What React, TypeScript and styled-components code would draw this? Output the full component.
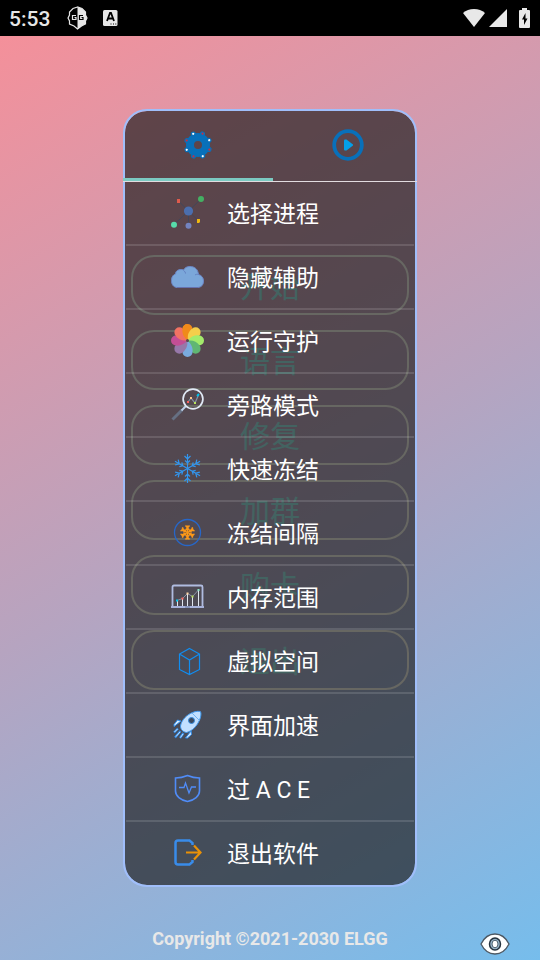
import React from "react";
import styled, { createGlobalStyle } from "styled-components";

const GlobalStyle = createGlobalStyle`
  * { box-sizing: border-box; }
  body { margin: 0; background: #000; }
  button { font: inherit; color: inherit; background: none; border: 0; padding: 0; cursor: pointer; }
  svg { display: block; flex: none; }
`;

const Screen = styled.div`
  display: flex;
  flex-direction: column;
  min-height: 100vh;
  font-family: Roboto, "Noto Sans CJK SC", sans-serif;
`;

const StatusBar = styled.header`
  display: flex;
  align-items: center;
  height: 36px;
  padding: 0 10px 0 9px;
  background: #000;
  color: #e6e6e6;
`;

const Clock = styled.time`
  font-size: 21px;
  font-weight: 500;
  line-height: 36px;
  margin-right: 17px;
  padding-top: 2px;
`;

const StatusGroup = styled.div<{ $gap: number; $end?: boolean }>`
  display: flex;
  align-items: center;
  gap: ${(p) => p.$gap}px;
  margin-left: ${(p) => (p.$end ? "auto" : "0")};
`;

const BatterySlot = styled.span`
  padding-left: 8px;
`;

const Stage = styled.main`
  position: relative;
  flex: 1;
  display: flex;
  flex-direction: column;
  align-items: center;
  padding: 219px 16px 9px;
  background: linear-gradient(150deg, #f4909a 0%, #b6a4c0 50%, #76bdec 100%);
`;

const Actions = styled.div`
  display: flex;
  flex-direction: column;
  gap: 15px;
  width: 100%;
  max-width: 278px;
  margin-bottom: 32px;
`;

const ActionButton = styled.button`
  && {
    height: 60px;
    border: 2px solid #fbfbec;
    border-radius: 23px;
    font-size: 30px;
    line-height: 56px;
    padding-top: 2px;
    color: #92f0ea;
  }
`;

const Copyright = styled.footer`
  margin-top: auto;
  font-size: 18px;
  font-weight: 700;
  line-height: 24px;
  color: #e8e8e8;
`;

const Overlay = styled.div`
  position: absolute;
  inset: 0;
  display: flex;
  align-items: center;
  justify-content: center;
`;

const Panel = styled.section`
  width: 100%;
  max-width: 294px;
  border: 2px solid #a0befa;
  border-radius: 24px;
  background: rgba(26, 26, 26, 0.66);
  background-clip: padding-box;
`;

const Tabs = styled.div`
  display: flex;
  overflow: hidden;
  margin: 0 -2px;
  border-bottom: 1px solid #e2dce0;
`;

const Tab = styled.button<{ $active?: boolean }>`
  && {
    display: flex;
    flex: 0 0 150px;
    align-items: center;
    justify-content: center;
    height: 70px;
    padding-top: 1px;
    border-bottom: 3px solid ${(p) => (p.$active ? "#7bcac2" : "transparent")};
  }
`;

const Menu = styled.ul`
  list-style: none;
  margin: 0;
  padding: 0 1px 1px;
`;

const MenuItem = styled.li`
  & + & {
    border-top: 2px solid rgba(255, 255, 255, 0.13);
  }
`;

const MenuButton = styled.button`
  && {
    display: flex;
    align-items: center;
    gap: 23px;
    width: 100%;
    height: 62px;
    padding: 0 0 2px 45px;
    font-size: 23px;
    line-height: 32px;
    color: #fff;
    text-align: left;
    white-space: pre;
  }
`;

const MenuLabel = styled.span`
  padding-top: 6px;
`;

const EyeButton = styled.button`
  position: absolute;
  right: 30px;
  bottom: 5px;
`;

const Icon = ({ children }: { children: React.ReactNode }) => (
  <svg width="33" height="33" viewBox="0 0 33 33" fill="none" aria-hidden="true">
    {children}
  </svg>
);

const NodesIcon = () => (
  <Icon>
    <path d="M17.5 15 7.5 5M17.5 15 30 3M17.5 15 3 28.5M17.5 15v15M17.5 15l10 10" stroke="#42465a" />
    <circle cx="17.5" cy="15" r="4.6" fill="#4b6eae" />
    <path d="M6 3h3v4H6z" fill="#de5b4c" />
    <circle cx="30" cy="3" r="3" fill="#44b063" />
    <circle cx="3" cy="28.7" r="3" fill="#57dcaa" />
    <circle cx="17.5" cy="29.8" r="3" fill="#7383bf" />
    <path d="M26 23h3v3l-1 1h-2z" fill="#efb810" />
  </Icon>
);

const CloudIcon = () => (
  <Icon>
    <path
      d="M6 27.5C2 27 .5 24 .5 20.500c0-4 2-6 4-6.500C4.500 11 7 9.500 10 9.500c1 0 2 0 2.500.5C14 7.500 16 6.500 19 6.500c5 0 8 3 8.500 8 3.500 1 5 3.500 5 6.500 0 4-2 6-5.500 6.500z"
      fill="#7ba7da"
      stroke="#6d86c5"
    />
    <path d="M12.500 10.500c1.500 1 2 2 2 3M24 15c1-.8 2-.8 3.500-.5" stroke="#627fc0" />
    <path d="M6 27.500h21.500" stroke="#6672ae" />
  </Icon>
);

const PETALS = ["#f08a1a", "#f4ce4b", "#a3eb6b", "#60b673", "#7aabdf", "#9778a9", "#c34e95", "#f17263"];

const FlowerIcon = () => (
  <Icon>
    {PETALS.map((color, i) => (
      <path
        key={color}
        d="M16.500 16C12.500 13.500 10.800 8.500 11.500 5a5 5 0 0 1 10 0c.7 4-1.500 8.500-5 11z"
        fill={color}
        transform={`rotate(${i * 45} 16.500 16.500)`}
      />
    ))}
    <path d="M16.500 16C12.500 13.500 10.800 8.500 11.500 5a5 5 0 0 1 5-5z" fill="#f08a1a" />
    <circle cx="16.500" cy="16.500" r="1.500" fill="#5c464c" />
  </Icon>
);

const MagnifierIcon = () => (
  <Icon>
    <path d="M1.500 31.500 11 22" stroke="#667083" strokeWidth="3" />
    <path d="m10.500 22.500 4.500-4.500" stroke="#bcd0ea" strokeWidth="2" />
    <circle cx="22" cy="11" r="9.900" stroke="#e1e9f6" strokeWidth="1.700" />
    <path d="m17 14 3-4 4 5 3.500-8" stroke="#8490a6" strokeWidth="1.200" />
    <path d="M16 13h2v2h-2z" fill="#fb605d" />
    <path d="M19 9h2v2h-2z" fill="#ffc58a" />
    <path d="M23 14h2v2h-2z" fill="#b6e45b" />
    <path d="m26 8 2-2" stroke="#00c3ee" strokeWidth="2" />
  </Icon>
);

const SnowflakeIcon = () => (
  <Icon>
    {[0, 60, 120, 180, 240, 300].map((a) => (
      <path
        key={a}
        d="M16.500 16.500V2m-3 2 3 3 3-3m-5.500 4.500 2.500 2.500 2.500-2.500"
        stroke="#3296ef"
        strokeWidth="1.200"
        transform={`rotate(${a} 16.500 16.500)`}
      />
    ))}
  </Icon>
);

const FreezeTimerIcon = () => (
  <Icon>
    <circle cx="16.500" cy="16.500" r="13" stroke="#2767c8" strokeWidth="1.300" />
    {[0, 60, 120, 180, 240, 300].map((a) => (
      <path
        key={a}
        d="M16.500 16.500v-7m-2 0 2 2.500 2-2.500m-3.500 3 1.500 2 1.500-2"
        stroke="#fb9818"
        strokeWidth="1.400"
        transform={`rotate(${a} 16.500 16.500)`}
      />
    ))}
  </Icon>
);

const ChartLaptopIcon = () => (
  <Icon>
    <path d="M1.500 26V7q0-1.500 1.500-1.500h27q1.500 0 1.500 1.500v19" stroke="#b0bce0" strokeWidth="1.800" />
    <path d="M0 26h33v2H0z" fill="#a7b2da" />
    <path d="M14 27h5" stroke="#69769a" />
    <path d="M6.500 21v5M11.500 19v7M16.500 14v12M21.500 17v9M27.500 11v15" stroke="#e0e5ee" />
    <path d="m6 20.500 5.500-2 5-5 5 3 5.500-6" stroke="#8d95a8" />
    <path d="M5 19.500h2v2H5z" fill="#00c8f0" />
    <path d="M10.500 17.500h2v2h-2z" fill="#ff665d" />
    <path d="M15.500 12.500h2v2h-2z" fill="#ffd4a1" />
    <path d="M20.500 15.500h2v2h-2z" fill="#b8df5e" />
    <path d="M26.500 9h2v2h-2z" fill="#8de5ca" />
  </Icon>
);

const CubeIcon = () => (
  <Icon>
    <path d="M18.500 4.500 28.500 10v15.500l-10 5-10-5V10zM8.500 10l10 6 10-6M18.500 16v14" stroke="#118df0" strokeWidth="1.200" />
  </Icon>
);

const RocketIcon = () => (
  <Icon>
    <path d="m10 13-7 5.500v-2L6.500 12zM20 23l-5.500 7h2l4-3.500z" fill="#d8ecff" stroke="#2f8eed" />
    <path
      d="M9.500 18c1-6 6-11 12-13.500 3-1.300 7-1.500 8-.8.800 1.300.5 5-.8 8C26 18 21.500 23 15.500 24.500 12 24 9.500 21.500 9.500 18z"
      fill="#c2e0ff"
      stroke="#3f99ef"
    />
    <path d="m21 5 7.500 7.500" stroke="#6fb4f4" />
    <circle cx="20.500" cy="12.500" r="3" fill="#3c4b60" stroke="#348de2" />
    <path d="m7 20.500-4 4M9.500 23 4 29.500M12.500 25 9 30" stroke="#338fed" strokeWidth="2.200" />
    <path d="m6.500 21-3 3M9 24l-4 4.500M12 26l-2.500 3.500" stroke="#e4f3ff" strokeWidth=".8" />
  </Icon>
);

const ShieldIcon = () => (
  <Icon>
    <path d="M16.500 3.500C20 5 24 6 28.500 6v13c0 5-5 9-12 10.500C9.500 28 4.500 24 4.500 19V6c4.500 0 8.500-1 12-2.500z" stroke="#508cf7" strokeWidth="1.600" />
    <path d="M8 15.500h5l1.500-4.500 3.500 10 2.500-6h4.500" stroke="#508cf7" strokeWidth="1.300" />
  </Icon>
);

const ExitIcon = () => (
  <Icon>
    <path d="M21.500 9V7L18.500 4.500H7Q4.500 4.500 4.500 7v19q0 2.500 2.500 2.500h11.500l3-2.500v-2" stroke="#398cea" strokeWidth="2.500" />
    <path d="M15 16.500h14M23 9.500l6.500 7-6.500 7" stroke="#e99107" strokeWidth="2.200" />
  </Icon>
);

const GearIcon = () => (
  <svg width="30" height="30" viewBox="0 0 30 30" aria-hidden="true">
    <circle cx="15" cy="15" r="8" fill="none" stroke="#0870ba" strokeWidth="8" />
    {[22, 67, 112, 157, 202, 247, 292, 337].map((a, i) => (
      <g key={a} transform={`rotate(${a} 15 15)`}>
        <circle cx="15" cy="3.200" r="2.600" fill="#0870ba" />
        <circle cx="15" cy="2.800" r="1.100" fill={i % 2 ? "#fff" : "#c92d43"} />
      </g>
    ))}
  </svg>
);

const PlayIcon = () => (
  <svg width="32" height="32" viewBox="0 0 32 32" aria-hidden="true">
    <circle cx="16" cy="16" r="13.800" fill="none" stroke="#0870ba" strokeWidth="3.800" />
    <path d="M12 11.500q0-1 1-1h1.500l6.500 5v1l-6.500 5H13q-1 0-1-1z" fill="#049fe8" />
  </svg>
);

const GuardianIcon = () => (
  <svg width="21" height="24" viewBox="0 0 21 24" aria-hidden="true">
    <path d="M10.500 1 6 2.500 2.500 6v3L1 12l1.500 3v3L7 20l3.500 3 4-3 4-2V15l1.500-3-1.500-3V6L15 2.500z" fill="#000" stroke="#e6e6e6" strokeWidth="1.200" />
    <path d="M10.500 1 15 2.500 18.500 6v3l1.500 3-1.500 3v3l-4 2-4 3z" fill="#e6e6e6" />
    <path d="M9 9.500H5.500v4H9v-2H7.500" fill="none" stroke="#e6e6e6" strokeWidth="1.200" />
    <path d="M16 9.500h-3.500v4H16v-2h-1.500" fill="none" stroke="#000" strokeWidth="1.200" />
  </svg>
);

const KeyboardIcon = () => (
  <svg width="15" height="16" viewBox="0 0 15 16" aria-hidden="true">
    <rect width="14.500" height="16" rx="1.500" fill="#e6e6e6" />
    <path d="m4 11 3-8h1l3 8M5 8.500h5" fill="none" stroke="#000" strokeWidth="1.800" />
    <path d="M7.500 14h1M10 14h1M12.300 14h1" stroke="#000" strokeWidth="1.200" />
  </svg>
);

const WifiIcon = () => (
  <svg width="22" height="18" viewBox="0 0 22 18" aria-hidden="true">
    <path d="M0 4Q4.500 0 11 0t11 4L11 18z" fill="#e8e8e8" />
  </svg>
);

const SignalIcon = () => (
  <svg width="18" height="18" viewBox="0 0 18 18" aria-hidden="true">
    <path d="M18 0v18H0z" fill="#e8e8e8" />
  </svg>
);

const BatteryIcon = () => (
  <svg width="11" height="20" viewBox="0 0 11 20" aria-hidden="true">
    <path d="M3 0h5v2h2q1 0 1 1v16q0 1-1 1H1q-1 0-1-1V3q0-1 1-1h2z" fill="#e8e8e8" />
    <path d="M6.500 5 3 11.500h2V17l3.500-6.500h-2z" fill="#000" />
  </svg>
);

const EyeIcon = () => (
  <svg width="30" height="22" viewBox="0 0 30 22" aria-hidden="true">
    <path d="M1 11Q6 1 15 1t14 10Q24 21 15 21T1 11z" fill="#fff" stroke="#4d5863" strokeWidth="1.300" />
    <ellipse cx="15" cy="11" rx="5.500" ry="6" fill="#9bb8cc" stroke="#26333f" strokeWidth="1.500" />
    <ellipse cx="15" cy="11" rx="3" ry="3.800" fill="#fff" stroke="#4c606f" />
  </svg>
);

const ACTIONS = ["开始", "语言", "修复", "加群", "购卡", "退出"];

const MENU: { label: string; icon: React.FC }[] = [
  { label: "选择进程", icon: NodesIcon },
  { label: "隐藏辅助", icon: CloudIcon },
  { label: "运行守护", icon: FlowerIcon },
  { label: "旁路模式", icon: MagnifierIcon },
  { label: "快速冻结", icon: SnowflakeIcon },
  { label: "冻结间隔", icon: FreezeTimerIcon },
  { label: "内存范围", icon: ChartLaptopIcon },
  { label: "虚拟空间", icon: CubeIcon },
  { label: "界面加速", icon: RocketIcon },
  { label: "过 A C E", icon: ShieldIcon },
  { label: "退出软件", icon: ExitIcon },
];

export default function App() {
  return (
    <Screen lang="zh-CN">
      <GlobalStyle />
      <StatusBar>
        <Clock>5:53</Clock>
        <StatusGroup $gap={15}>
          <GuardianIcon />
          <KeyboardIcon />
        </StatusGroup>
        <StatusGroup $gap={4} $end>
          <WifiIcon />
          <SignalIcon />
          <BatterySlot>
            <BatteryIcon />
          </BatterySlot>
        </StatusGroup>
      </StatusBar>
      <Stage>
        <Actions>
          {ACTIONS.map((label) => (
            <ActionButton key={label}>{label}</ActionButton>
          ))}
        </Actions>
        <Copyright>Copyright ©2021-2030 ELGG</Copyright>
        <Overlay>
          <Panel role="dialog" aria-label="ELGG">
            <Tabs role="tablist">
              <Tab role="tab" aria-selected="true" aria-label="设置" $active>
                <GearIcon />
              </Tab>
              <Tab role="tab" aria-selected="false" aria-label="运行">
                <PlayIcon />
              </Tab>
            </Tabs>
            <Menu>
              {MENU.map(({ label, icon: ItemIcon }) => (
                <MenuItem key={label}>
                  <MenuButton>
                    <ItemIcon />
                    <MenuLabel>{label}</MenuLabel>
                  </MenuButton>
                </MenuItem>
              ))}
            </Menu>
          </Panel>
        </Overlay>
        <EyeButton aria-label="显示">
          <EyeIcon />
        </EyeButton>
      </Stage>
    </Screen>
  );
}
